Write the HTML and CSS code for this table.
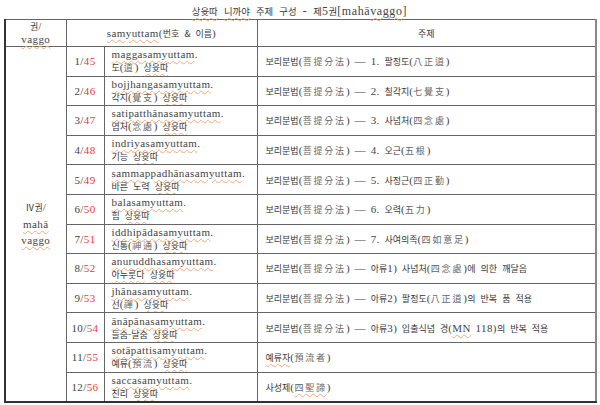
FILE: index.html
```html
<!DOCTYPE html>
<html lang="ko">
<head>
<meta charset="utf-8">
<link rel="stylesheet" href="styles.css">
</head>
<body>
<div class="page">
  <div class="title"><span class="k"><span class="sq">상윳따</span> <span class="sq">니까야</span> 주제 구성</span> - <span class="k">제</span>5<span class="k">권</span>[mahā<span class="sq">vaggo</span>]</div>
  <table class="tbl">
    <colgroup>
      <col class="c1"><col class="c2"><col class="c3"><col class="c4">
    </colgroup>
    <thead>
      <tr class="head">
        <th><span class="k">권</span>/<br><span class="sq">vaggo</span></th>
        <th colspan="2"><span class="sq">samyuttam</span>(<span class="k">번호 &amp; 이름</span>)</th>
        <th><span class="k">주제</span></th>
      </tr>
    </thead>
    <tbody>
      <tr>
        <td class="vol" rowspan="12"><span class="k">Ⅳ권</span>/<br><span class="sq">mahā</span><br><span class="sq">vaggo</span></td>
        <td class="num">1/<span class="red">45</span></td>
        <td class="name"><span class="sq">maggasamyuttam</span>.<br><span class="k">도</span>(<span class="hj">道</span>) <span class="k sq">상윳따</span></td>
        <td class="topic"><span class="k">보리분법</span>(<span class="hj">菩提分法</span>) — 1. <span class="k">팔정도</span>(<span class="hj">八正道</span>)</td>
      </tr>
      <tr>
        <td class="num">2/<span class="red">46</span></td>
        <td class="name"><span class="sq">bojjhangasamyuttam</span>.<br><span class="k">각지</span>(<span class="hj">覺支</span>) <span class="k sq">상윳따</span></td>
        <td class="topic"><span class="k">보리분법</span>(<span class="hj">菩提分法</span>) — 2. <span class="k">칠각지</span>(<span class="hj">七覺支</span>)</td>
      </tr>
      <tr>
        <td class="num">3/<span class="red">47</span></td>
        <td class="name"><span class="sq">satipatthānasamyuttam</span>.<br><span class="k">염처</span>(<span class="hj">念處</span>) <span class="k sq">상윳따</span></td>
        <td class="topic"><span class="k">보리분법</span>(<span class="hj">菩提分法</span>) — 3. <span class="k">사념처</span>(<span class="hj">四念處</span>)</td>
      </tr>
      <tr>
        <td class="num">4/<span class="red">48</span></td>
        <td class="name"><span class="sq">indriyasamyuttam</span>.<br><span class="k">기능 <span class="sq">상윳따</span></span></td>
        <td class="topic"><span class="k">보리분법</span>(<span class="hj">菩提分法</span>) — 4. <span class="k">오근</span>(<span class="hj">五根</span>)</td>
      </tr>
      <tr>
        <td class="num">5/<span class="red">49</span></td>
        <td class="name"><span class="sq">sammappadhānasamyuttam</span>.<br><span class="k">바른 노력 <span class="sq">상윳따</span></span></td>
        <td class="topic"><span class="k">보리분법</span>(<span class="hj">菩提分法</span>) — 5. <span class="k">사정근</span>(<span class="hj">四正勤</span>)</td>
      </tr>
      <tr>
        <td class="num">6/<span class="red">50</span></td>
        <td class="name"><span class="sq">balasamyuttam</span>.<br><span class="k">힘 <span class="sq">상윳따</span></span></td>
        <td class="topic"><span class="k">보리분법</span>(<span class="hj">菩提分法</span>) — 6. <span class="k">오력</span>(<span class="hj">五力</span>)</td>
      </tr>
      <tr>
        <td class="num">7/<span class="red">51</span></td>
        <td class="name"><span class="sq">iddhipādasamyuttam</span>.<br><span class="k">신통</span>(<span class="hj">神通</span>) <span class="k sq">상윳따</span></td>
        <td class="topic"><span class="k">보리분법</span>(<span class="hj">菩提分法</span>) — 7. <span class="k">사여의족</span>(<span class="hj">四如意足</span>)</td>
      </tr>
      <tr>
        <td class="num">8/<span class="red">52</span></td>
        <td class="name"><span class="sq">anuruddhasamyuttam</span>.<br><span class="k"><span class="sq">아누룻다</span> <span class="sq">상윳따</span></span></td>
        <td class="topic"><span class="k">보리분법</span>(<span class="hj">菩提分法</span>) — <span class="k">아류</span>1) <span class="k">사념처</span>(<span class="hj">四念處</span>)<span class="k">에 의한 깨달음</span></td>
      </tr>
      <tr>
        <td class="num">9/<span class="red">53</span></td>
        <td class="name"><span class="sq">jhānasamyuttam</span>.<br><span class="k">선</span>(<span class="hj">禪</span>) <span class="k sq">상윳따</span></td>
        <td class="topic"><span class="k">보리분법</span>(<span class="hj">菩提分法</span>) — <span class="k">아류</span>2) <span class="k">팔정도</span>(<span class="hj">八正道</span>)<span class="k">의 반복 품 적용</span></td>
      </tr>
      <tr>
        <td class="num">10/<span class="red">54</span></td>
        <td class="name"><span class="sq">ānāpānasamyuttam</span>.<br><span class="k">들숨-날숨 <span class="sq">상윳따</span></span></td>
        <td class="topic"><span class="k">보리분법</span>(<span class="hj">菩提分法</span>) — <span class="k">아류</span>3) <span class="k">입출식념 경</span>(<span class="sq">MN</span> 118)<span class="k">의 반복 적용</span></td>
      </tr>
      <tr>
        <td class="num">11/<span class="red">55</span></td>
        <td class="name"><span class="sq">sotāpattisamyuttam</span>.<br><span class="k">예류</span>(<span class="hj">預流</span>) <span class="k sq">상윳따</span></td>
        <td class="topic"><span class="k sq">예류자</span>(<span class="hj">預流者</span>)</td>
      </tr>
      <tr>
        <td class="num">12/<span class="red">56</span></td>
        <td class="name"><span class="sq">saccasamyuttam</span>.<br><span class="k">진리 <span class="sq">상윳따</span></span></td>
        <td class="topic"><span class="k">사성제</span>(<span class="hj sq">四聖諦</span>)</td>
      </tr>
    </tbody>
  </table>
</div>
</body>
</html>
```
FILE: styles.css
```css
html, body {
  margin: 0;
  padding: 0;
  background: #fff;
}
body {
  font-family: "Liberation Serif", "Noto Sans CJK KR", serif;
  font-size: 11px;
  letter-spacing: 0.4px;
  word-spacing: 1.5px;
  color: #444;
}
.page {
  width: 600px;
  height: 405px;
  padding: 4px 0 0 4px;
  box-sizing: border-box;
  overflow: hidden;
}
.title {
  width: 591px;
  height: 15px;
  line-height: 15px;
  text-align: center;
  font-size: 12px;
  letter-spacing: 0.6px;
  word-spacing: 2.5px;
}
.k {
  font-family: "Noto Sans CJK KR", "Liberation Sans", sans-serif;
  font-size: 9px;
  line-height: 1;
  letter-spacing: 0;
  word-spacing: 2.5px;
  color: #383838;
}
.title .k {
  font-size: 9.4px;
  word-spacing: 3.5px;
}
.hj {
  font-family: "Noto Sans CJK KR", sans-serif;
  font-size: 9px;
  line-height: 1;
  letter-spacing: 1.8px;
  color: #666;
}
.tbl {
  border-collapse: collapse;
  width: 591px;
  table-layout: fixed;
  border-top: 1px solid #777;
  border-right: 2px solid #888;
  border-left: 2px solid #333;
  border-bottom: 2px solid #333;
}
.c1 { width: 61px; }
.c2 { width: 38px; }
.c3 { width: 153px; }
.c4 { width: 339px; }
.tbl th, .tbl td {
  border: 1px solid #666;
  padding: 0;
  font-weight: normal;
  line-height: 14px;
}
.head th {
  height: 25px;
  text-align: center;
  vertical-align: middle;
  line-height: 13px;
}
.tbl tbody td {
  height: 28.6px;
  vertical-align: middle;
}
.tbl td.vol {
  text-align: center;
  line-height: 16.5px;
}
.num {
  text-align: center;
}
.tbl td.name {
  padding-left: 7px;
  line-height: 13px;
  white-space: nowrap;
  overflow: hidden;
}
.tbl td.topic {
  padding-left: 8px;
  white-space: nowrap;
}
.red {
  color: #e8393b;
}
.sq {
  text-decoration-line: underline;
  text-decoration-style: wavy;
  text-decoration-color: #f2a878;
  text-decoration-thickness: 1px;
  text-underline-offset: 2px;
}
```
